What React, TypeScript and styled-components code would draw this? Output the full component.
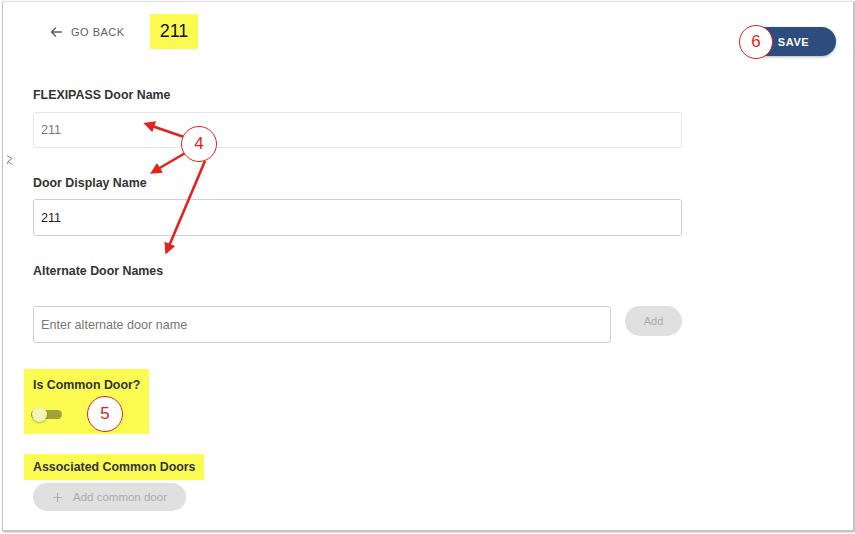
import React from "react";
import styled, { createGlobalStyle } from "styled-components";

const GlobalStyle = createGlobalStyle`
  html, body {
    margin: 0;
    padding: 0;
    background: #ffffff;
  }
  body {
    font-family: "Liberation Sans", Arial, sans-serif;
  }
  * {
    box-sizing: border-box;
  }
`;

const Page = styled.div`
  position: relative;
  width: 855px;
  height: 534px;
  overflow: hidden;
  background: #ffffff;
`;

const Frame = styled.div`
  margin: 1px 0 0 2px;
  width: 852px;
  height: 530px;
  border: 1px solid #c4c4c4;
  border-top-color: #e2e2e2;
  box-shadow: 1px 1px 2px rgba(0, 0, 0, 0.35);
  background: #ffffff;
`;

const Header = styled.header`
  display: flex;
  align-items: flex-start;
  justify-content: space-between;
  padding: 12px 17px 0 47px;
`;

const HeaderLeft = styled.div`
  display: flex;
  align-items: center;
  gap: 25px;
`;

const BackLink = styled.a`
  display: flex;
  align-items: center;
  gap: 9px;
  color: #5f5f5f;
  font-size: 11px;
  letter-spacing: 0.5px;
  text-transform: uppercase;
  text-decoration: none;
  cursor: pointer;
`;

const Highlight = styled.div<{ $width?: number }>`
  background: #fbfb52;
  width: ${(p) => (p.$width ? `${p.$width}px` : "fit-content")};
`;

const DoorTitle = styled(Highlight)`
  height: 35px;
  padding: 0 10px;
  display: flex;
  align-items: center;
  justify-content: center;
  font-size: 18px;
  font-weight: 500;
  color: #111;
`;

const SaveButton = styled.button`
  position: relative;
  margin-top: 13px;
  width: 95px;
  height: 29px;
  border: none;
  border-radius: 15px;
  background: #2c4d7d;
  box-shadow: 0 1px 3px rgba(0, 0, 0, 0.3);
  color: #ffffff;
  font-family: inherit;
  font-size: 11px;
  font-weight: 700;
  letter-spacing: 0.6px;
  padding: 0 0 0 10px;
  cursor: pointer;
`;

const Callout = styled.span<{ $size?: number }>`
  display: inline-flex;
  align-items: center;
  justify-content: center;
  flex-shrink: 0;
  width: ${(p) => p.$size ?? 35}px;
  height: ${(p) => p.$size ?? 35}px;
  border: 1.6px solid #e3221b;
  border-radius: 50%;
  background: #ffffff;
  color: #e3221b;
  font-family: "Liberation Sans", Arial, sans-serif;
  font-size: 17px;
  font-weight: 400;
  letter-spacing: 0;
`;

const SaveCallout = styled(Callout)`
  position: absolute;
  left: -2px;
  top: -2px;
`;

const FloatingCallout = styled(Callout)`
  position: absolute;
  left: 181px;
  top: 126px;
  z-index: 2;
`;

const Form = styled.form`
  margin-top: 31px;
  padding-left: 30px;
  width: 679px;
  display: flex;
  flex-direction: column;
`;

const Label = styled.label<{ $gap?: number }>`
  display: block;
  font-size: 12.4px;
  font-weight: 700;
  line-height: 16px;
  color: #333333;
  white-space: nowrap;
  margin-bottom: ${(p) => p.$gap ?? 9}px;
`;

const Field = styled.div`
  margin-bottom: 27px;
`;

const Input = styled.input<{ $height?: number }>`
  width: 100%;
  min-width: 0;
  height: ${(p) => p.$height ?? 37}px;
  padding: 0 7px;
  border: 1px solid #cfcfcf;
  border-radius: 3px;
  font-family: inherit;
  font-size: 12.6px;
  color: #222;
  background: #ffffff;
  outline: none;

  &::placeholder {
    color: #777;
  }

  &:disabled {
    border-color: #e6e6e6;
    color: #a5a5a5;
  }
`;

const InputRow = styled.div`
  display: flex;
  align-items: flex-start;
  gap: 14px;
`;

const PillButton = styled.button`
  display: flex;
  align-items: center;
  flex-shrink: 0;
  height: 30px;
  border: none;
  border-radius: 15px;
  background: #e0e0e0;
  color: #ababab;
  font-family: inherit;
  font-size: 11px;
  cursor: default;
`;

const AddButton = styled(PillButton)`
  width: 57px;
  justify-content: center;
  padding: 0;
`;

const AddCommonButton = styled(PillButton)`
  margin-top: 3px;
  width: 153px;
  height: 28px;
  gap: 11px;
  padding: 0 0 0 20px;
  font-size: 11.5px;
`;

const CommonBox = styled(Highlight)`
  margin: 26px 0 0 -9px;
  padding: 8px 9px 2px;
  height: 65px;
`;

const ToggleRow = styled.div`
  display: flex;
  align-items: center;
  gap: 25px;
  margin: 3px 0 0 -2px;
`;

const Track = styled.span`
  position: relative;
  display: block;
  width: 31px;
  height: 9px;
  border-radius: 5px;
  background: #a2a23a;
`;

const Thumb = styled.span`
  position: absolute;
  left: 1px;
  top: -3px;
  width: 15px;
  height: 15px;
  border-radius: 50%;
  background: #f3f3b4;
  box-shadow: 0 1px 2px rgba(0, 0, 0, 0.3);
`;

const AssocBox = styled(Highlight)`
  margin: 20px 0 0 -9px;
  padding: 5px 9px;
  height: 26px;
`;

const Annotations = styled.svg`
  position: absolute;
  left: 0;
  top: 0;
  pointer-events: none;
  z-index: 1;
`;

const Scribble = styled.svg`
  position: absolute;
  left: 6px;
  top: 154px;
`;

const arrows = [
  { x1: 184, y1: 137, x2: 152, y2: 126 },
  { x1: 187, y1: 152, x2: 158, y2: 169 },
  { x1: 205, y1: 161, x2: 169, y2: 246 },
];

export default function App() {
  return (
    <Page>
      <GlobalStyle />
      <Frame>
        <Header>
          <HeaderLeft>
            <BackLink>
              <svg width="12" height="10" viewBox="0 0 12 10" fill="none">
                <path
                  d="M11.5 5H1.5M5.5 1L1.5 5L5.5 9"
                  stroke="#5f5f5f"
                  strokeWidth="1.4"
                  strokeLinecap="round"
                  strokeLinejoin="round"
                />
              </svg>
              Go back
            </BackLink>
            <DoorTitle>211</DoorTitle>
          </HeaderLeft>
          <SaveButton>
            <SaveCallout $size={34}>6</SaveCallout>
            SAVE
          </SaveButton>
        </Header>

        <Form>
          <Field>
            <Label>FLEXIPASS Door Name</Label>
            <Input $height={36} placeholder="211" disabled />
          </Field>
          <Field>
            <Label $gap={8}>Door Display Name</Label>
            <Input defaultValue="211" />
          </Field>
          <Label $gap={27}>Alternate Door Names</Label>
          <InputRow>
            <Input placeholder="Enter alternate door name" />
            <AddButton type="button">Add</AddButton>
          </InputRow>

          <CommonBox $width={125}>
            <Label $gap={0}>Is Common Door?</Label>
            <ToggleRow>
              <Track>
                <Thumb />
              </Track>
              <Callout $size={36}>5</Callout>
            </ToggleRow>
          </CommonBox>

          <AssocBox>
            <Label $gap={0}>Associated Common Doors</Label>
          </AssocBox>
          <AddCommonButton type="button">
            <svg width="9" height="9" viewBox="0 0 9 9">
              <path d="M4.5 0V9M0 4.5H9" stroke="#b0b0b0" strokeWidth="1.2" />
            </svg>
            Add common door
          </AddCommonButton>
        </Form>
      </Frame>

      <Scribble width="8" height="12" viewBox="0 0 8 12" fill="none">
        <path
          d="M1 1.5L6 4.5L2 7.5L6.5 10.5M2 7.5L1.5 10"
          stroke="#777"
          strokeWidth="0.9"
        />
      </Scribble>

      <FloatingCallout $size={36}>4</FloatingCallout>
      <Annotations width="855" height="534" viewBox="0 0 855 534">
        <defs>
          <marker
            id="head"
            viewBox="0 0 10 10"
            refX="2"
            refY="5"
            markerWidth="4.4"
            markerHeight="4.4"
            orient="auto"
          >
            <path d="M0 0L10 5L0 10Z" fill="#e3221b" />
          </marker>
        </defs>
        {arrows.map((a, i) => (
          <line
            key={i}
            x1={a.x1}
            y1={a.y1}
            x2={a.x2}
            y2={a.y2}
            stroke="#e3221b"
            strokeWidth="2.6"
            markerEnd="url(#head)"
          />
        ))}
      </Annotations>
    </Page>
  );
}
